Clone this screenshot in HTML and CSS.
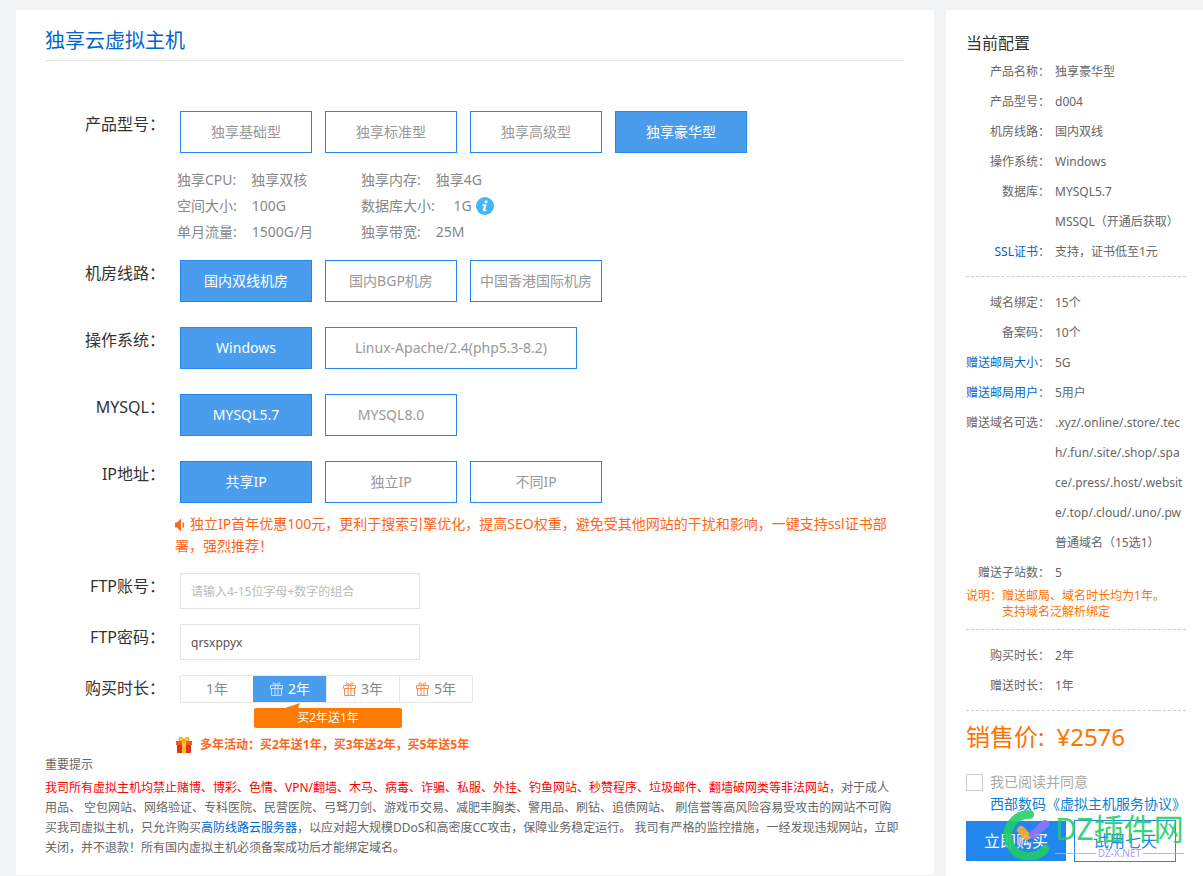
FILE: index.html
```html
<!DOCTYPE html>
<html lang="zh-CN">
<head>
<meta charset="utf-8">
<meta name="viewport" content="width=device-width, initial-scale=1">
<title>独享云虚拟主机</title>
<link rel="stylesheet" href="styles.css">
</head>
<body>
<svg class="defs" aria-hidden="true">
  <symbol id="gift-line" viewBox="0 0 13 14">
    <g fill="none" stroke="currentColor">
      <path d="M.5 3.500h12v3H.5zM1.500 6.500v7h10v-7M5 3.500v10M8 3.500v10"/>
      <path d="M6.500 3.500C5.500 1 4 .2 3.200.8S3.300 3.300 6.500 3.500C9.700 3.300 10.600 1.400 9.800.8S7.500 1 6.500 3.500z"/>
    </g>
  </symbol>
</svg>
<div class="page">
  <main class="card">
    <h1 class="title">独享云虚拟主机</h1>
    <form class="form">
      <div class="row">
        <span class="label" id="l-model">产品型号：</span>
        <div class="field">
          <div class="options" role="group" aria-labelledby="l-model">
            <button type="button" class="opt">独享基础型</button>
            <button type="button" class="opt">独享标准型</button>
            <button type="button" class="opt">独享高级型</button>
            <button type="button" class="opt on">独享豪华型</button>
          </div>
          <dl class="specs">
            <div class="spec"><dt>独享CPU:</dt><dd>独享双核</dd></div>
            <div class="spec"><dt>独享内存:</dt><dd>独享4G</dd></div>
            <div class="spec"><dt>空间大小:</dt><dd>100G</dd></div>
            <div class="spec"><dt>数据库大小:</dt><dd class="with-info">&nbsp;1G
              <svg class="info" viewBox="0 0 18 18" aria-label="说明"><circle cx="9" cy="9" r="9" fill="#46b6fb"/><circle cx="10" cy="4.700" r="1.500" fill="#fff"/><path d="M6.600 7.200h4l-1.400 5.700h1.300l-.3 1.200c-1.600.7-3.700.6-3.300-1L8 8.700H6.300z" fill="#fff"/></svg></dd></div>
            <div class="spec"><dt>单月流量:</dt><dd>1500G/月</dd></div>
            <div class="spec"><dt>独享带宽:</dt><dd>25M</dd></div>
          </dl>
        </div>
      </div>
      <div class="row">
        <span class="label" id="l-room">机房线路：</span>
        <div class="options" role="group" aria-labelledby="l-room">
          <button type="button" class="opt on">国内双线机房</button>
          <button type="button" class="opt">国内BGP机房</button>
          <button type="button" class="opt">中国香港国际机房</button>
        </div>
      </div>
      <div class="row">
        <span class="label" id="l-os">操作系统：</span>
        <div class="options" role="group" aria-labelledby="l-os">
          <button type="button" class="opt on">Windows</button>
          <button type="button" class="opt wide">Linux-Apache/2.4(php5.3-8.2)</button>
        </div>
      </div>
      <div class="row">
        <span class="label" id="l-db">MYSQL：</span>
        <div class="options" role="group" aria-labelledby="l-db">
          <button type="button" class="opt on">MYSQL5.7</button>
          <button type="button" class="opt">MYSQL8.0</button>
        </div>
      </div>
      <div class="row">
        <span class="label" id="l-ip">IP地址：</span>
        <div class="field">
          <div class="options" role="group" aria-labelledby="l-ip">
            <button type="button" class="opt on">共享IP</button>
            <button type="button" class="opt">独立IP</button>
            <button type="button" class="opt">不同IP</button>
          </div>
          <p class="ip-note"><svg class="horn" viewBox="0 0 11 14" aria-hidden="true"><path d="M0 4.500h2L6 .5v13L2 9.500H0z" fill="#ff6519"/><path d="M7.500 3.500c2.300 1.500 2.300 5.500 0 7z" fill="#ff6519"/></svg>独立IP首年优惠100元，更利于搜索引擎优化，提高SEO权重，避免受其他网站的干扰和影响，一键支持ssl证书部署，强烈推荐！</p>
        </div>
      </div>
      <div class="row">
        <label class="label" for="ftp-user">FTP账号：</label>
        <input class="text" id="ftp-user" type="text" placeholder="请输入4-15位字母+数字的组合">
      </div>
      <div class="row">
        <label class="label" for="ftp-pass">FTP密码：</label>
        <input class="text" id="ftp-pass" type="text" value="qrsxppyx">
      </div>
      <div class="row">
        <span class="label" id="l-time">购买时长：</span>
        <div class="field">
          <div class="years" role="group" aria-labelledby="l-time">
            <button type="button" class="year">1年</button>
            <button type="button" class="year on"><svg class="gift"><use href="#gift-line"/></svg>2年</button>
            <button type="button" class="year"><svg class="gift"><use href="#gift-line"/></svg>3年</button>
            <button type="button" class="year"><svg class="gift"><use href="#gift-line"/></svg>5年</button>
          </div>
          <div class="tip"><svg class="tail" viewBox="0 0 15 5" aria-hidden="true"><path d="M0 5 15 0l-2 5z" fill="#ff7a00"/></svg>买2年送1年</div>
          <p class="promo"><svg class="present" viewBox="0 0 16 16" aria-hidden="true"><path d="M0 4h16v4H0z" fill="#f5552f"/><path d="M1 8h14v7a1 1 0 0 1-1 1H2a1 1 0 0 1-1-1z" fill="#e0341a"/><path d="M6 4h4v12H6z" fill="#ffc21c"/><path d="M8 4C5 4 2.500 3 3.500 1.300S7 1.500 8 4c1-2.500 3.500-4.400 4.500-2.700S11 4 8 4z" fill="none" stroke="#f5a80c" stroke-width="1.500"/></svg>多年活动：买2年送1年，买3年送2年，买5年送5年</p>
        </div>
      </div>
    </form>
    <section class="notice">
      <h2 class="notice-title">重要提示</h2>
      <p class="notice-text"><span class="danger">我司所有虚拟主机均禁止赌博、博彩、色情、VPN/翻墙、木马、病毒、诈骗、私服、外挂、钓鱼网站、秒赞程序、垃圾邮件、翻墙破网类等非法网站</span>，对于成人<br>用品、 空包网站、网络验证、专科医院、民营医院、弓驽刀剑、游戏币交易、减肥丰胸类、警用品、刷钻、追债网站、 刷信誉等高风险容易受攻击的网站不可购<br>买我司虚拟主机，只允许购买<a href="#">高防线路云服务器</a>，以应对超大规模DDoS和高密度CC攻击，保障业务稳定运行。 我司有严格的监控措施，一经发现违规网站，立即<br>关闭，并不退款！所有国内虚拟主机必须备案成功后才能绑定域名。</p>
    </section>
  </main>
  <aside class="side">
    <h2 class="side-title">当前配置</h2>
    <dl class="config">
      <dt>产品名称：</dt><dd>独享豪华型</dd>
      <dt>产品型号：</dt><dd>d004</dd>
      <dt>机房线路：</dt><dd>国内双线</dd>
      <dt>操作系统：</dt><dd>Windows</dd>
      <dt>数据库：</dt><dd>MYSQL5.7<br>MSSQL（开通后获取）</dd>
      <dt><a href="#">SSL证书</a>：</dt><dd>支持，证书低至1元</dd>
    </dl>
    <dl class="config sep">
      <dt>域名绑定：</dt><dd>15个</dd>
      <dt>备案码：</dt><dd>10个</dd>
      <dt><a href="#">赠送邮局大小</a>：</dt><dd>5G</dd>
      <dt><a href="#">赠送邮局用户</a>：</dt><dd>5用户</dd>
      <dt>赠送域名可选：</dt><dd>.xyz/.online/.store/.tec<wbr>h/.fun/.site/.shop/.spa<wbr>ce/.press/.host/.websit<wbr>e/.top/.cloud/.uno/.pw<br>普通域名（15选1）</dd>
      <dt>赠送子站数：</dt><dd>5</dd>
    </dl>
    <div class="remark"><span>说明：</span><span>赠送邮局、域名时长均为1年。<br>支持域名泛解析绑定</span></div>
    <dl class="config sep last">
      <dt>购买时长：</dt><dd>2年</dd>
      <dt>赠送时长：</dt><dd>1年</dd>
    </dl>
    <p class="price"><span>销售价:</span><span>¥2576</span></p>
    <div class="agree">
      <input class="check" id="agree" type="checkbox">
      <label for="agree">我已阅读并同意</label>
      <a class="terms" href="#">西部数码《虚拟主机服务协议》</a>
    </div>
    <div class="actions">
      <button type="button" class="buy">立即购买</button>
      <button type="button" class="try">试用七天</button>
      <div class="mark">
        <svg class="mark-logo" viewBox="0 0 50 50" aria-hidden="true">
          <path d="M27 4.500A21 21 0 1 0 42 39" fill="none" stroke="#1fce63" stroke-width="8.500" stroke-linecap="round"/>
          <path d="M25 20l7 7-5 6-8-6z" fill="#1273ea"/>
          <path d="M18 20l6 6" stroke="#f5ae34" stroke-width="8" stroke-linecap="round"/>
          <path d="M42 14 30 25" stroke="#9277fb" stroke-width="8" stroke-linecap="round"/>
        </svg>
        <div class="mark-words"><span class="mark-name">DZ插件网</span><span class="mark-site">DZ-X.NET</span></div>
      </div>
    </div>
  </aside>
</div>
</body>
</html>
```
FILE: styles.css
```css
* { box-sizing: border-box; }
body, h1, h2, p, dl, dd { margin: 0; }
h1, h2 { font-weight: 400; }
body {
  background: #f1f3f5;
  color: #666;
  font: 12px/20px "Noto Sans", "Noto Sans CJK SC", sans-serif;
}
button, input { font: inherit; margin: 0; border-radius: 0; }
button { cursor: pointer; padding: 0; }
a { color: #06c; text-decoration: none; }
.defs { position: absolute; width: 0; height: 0; }

.page {
  display: grid;
  grid-template-columns: minmax(0, 1fr) 257px;
  gap: 12px;
  min-height: 100vh;
  padding: 10px 0 0 16px;
}
.card { background: #fff; margin-bottom: 1px; padding: 16px 30px 0 29px; }
.title {
  padding-bottom: 4px;
  border-bottom: 1px solid #e3e3e3;
  color: #06c;
  font-size: 20px;
  line-height: 30px;
}
.form { padding-top: 50px; }
.row {
  display: grid;
  grid-template-columns: 120px minmax(0, 1fr);
  gap: 15px;
  margin-bottom: 25px;
}
.row:nth-child(1), .row:nth-child(6), .row:nth-child(7) { margin-bottom: 15px; }
.row:nth-child(5) { margin-bottom: 16px; }
.row:last-child { margin-bottom: 0; }
.label {
  color: #333;
  font-size: 16px;
  line-height: 26px;
  text-align: right;
  white-space: nowrap;
}
.options { display: flex; flex-wrap: wrap; gap: 13px; }
.opt {
  width: 132px;
  height: 42px;
  border: 1px solid #2286ee;
  background: #fff;
  color: #999;
  font-size: 14px;
  white-space: nowrap;
}
.opt.wide { width: 252px; }
.opt.on, .year.on { background: #4a9cec; color: #fff; }

.specs {
  display: grid;
  grid-template-columns: 184px 184px;
  margin: 14px 0 0 -3px;
  color: #888;
  font-size: 14px;
  line-height: 26px;
}
.spec { display: flex; gap: 15px; }
.with-info { display: flex; align-items: center; gap: 4px; white-space: pre-line; }
.info { width: 18px; height: 18px; }

.ip-note {
  max-width: 720px;
  margin: 10px 0 0 -5px;
  color: #ff6519;
  font-size: 14px;
  line-height: 22px;
}
.horn { width: 11px; height: 14px; margin-right: 4px; vertical-align: -3px; }

.text {
  width: 240px;
  height: 36px;
  border: 1px solid #e4e4e4;
  padding: 0 10px;
  color: #555;
}
.text::placeholder { color: #bbb; }

.years { display: flex; width: 293px; border: 1px solid #e6e6e6; border-radius: 2px; }
.year {
  display: flex;
  flex: 1;
  align-items: center;
  justify-content: center;
  gap: 5px;
  height: 26px;
  border: 0;
  background: #fff;
  color: #888;
  font-size: 14px;
}
.year + .year { border-left: 1px solid #e6e6e6; }
.year.on { border-color: #4a9cec; }
.gift { width: 13px; height: 14px; color: #ff8a4a; }
.on .gift { color: #c4e0fb; }
.tip {
  position: relative;
  width: 148px;
  margin: 5px 0 0 74px;
  border-radius: 2px;
  background: #ff7a00;
  color: #fff;
  text-align: center;
}
.tail { position: absolute; left: 31px; top: -5px; width: 15px; height: 5px; }
.promo {
  display: flex;
  align-items: center;
  gap: 8px;
  margin: 7px 0 0 -4px;
  color: #ff6519;
  font-weight: 700;
}
.present { width: 16px; height: 16px; }

.notice-title { font-size: 12px; line-height: 20px; }
.notice-text { padding-top: 3px; line-height: 20px; }
.danger { color: #f00; }

.side { background: #fff; padding: 21px 17px 0 20px; }
.side-title { padding-bottom: 2px; color: #333; font-size: 16px; line-height: 24px; }
.config {
  display: grid;
  grid-template-columns: 84px minmax(0, 1fr);
  column-gap: 5px;
  line-height: 30px;
}
.config dt { text-align: right; white-space: nowrap; }
.config dd { white-space: nowrap; }
.config.sep { margin-top: 9px; padding-top: 11px; border-top: 1px dashed #ccc; }
.config.last { padding-bottom: 9px; border-bottom: 1px dashed #ccc; }
.remark { display: flex; color: #ff7200; line-height: 16px; white-space: nowrap; }
.price {
  display: flex;
  gap: 12px;
  padding-top: 8px;
  color: #ff7200;
  font-size: 24px;
  line-height: 36px;
}
.agree {
  display: grid;
  grid-template-columns: 17px 1fr;
  column-gap: 7px;
  align-items: center;
  padding-top: 16px;
  color: #aaa;
  font-size: 14px;
  line-height: 22px;
}
.check {
  width: 17px;
  height: 17px;
  appearance: none;
  border: 1px solid #ccc;
  background: #fff;
}
.terms { grid-column: 2; color: #0a80d8; white-space: nowrap; }
.actions { position: relative; display: flex; align-items: center; gap: 8px; padding-top: 5px; }
.buy, .try { font-size: 16px; }
.buy { width: 100px; height: 40px; border: 0; background: #2286ee; color: #fff; }
.try { width: 102px; height: 42px; border: 1px solid #2286ee; background: #fff; color: #2286ee; }
.mark {
  position: absolute;
  left: 37px;
  top: -5px;
  display: flex;
  gap: 2px;
  opacity: .88;
  pointer-events: none;
}
.mark-logo { width: 50px; height: 50px; }
.mark-words { display: flex; flex-direction: column; color: #1fce63; }
.mark-name { font-size: 30px; line-height: 38px; white-space: nowrap; }
.mark-site {
  display: flex;
  align-items: center;
  gap: 2px;
  color: #a78bfa;
  font-size: 10px;
  line-height: 10px;
}
.mark-site::before, .mark-site::after { content: ""; flex: 1; border-top: 1px solid #b9a5fb; }
```
